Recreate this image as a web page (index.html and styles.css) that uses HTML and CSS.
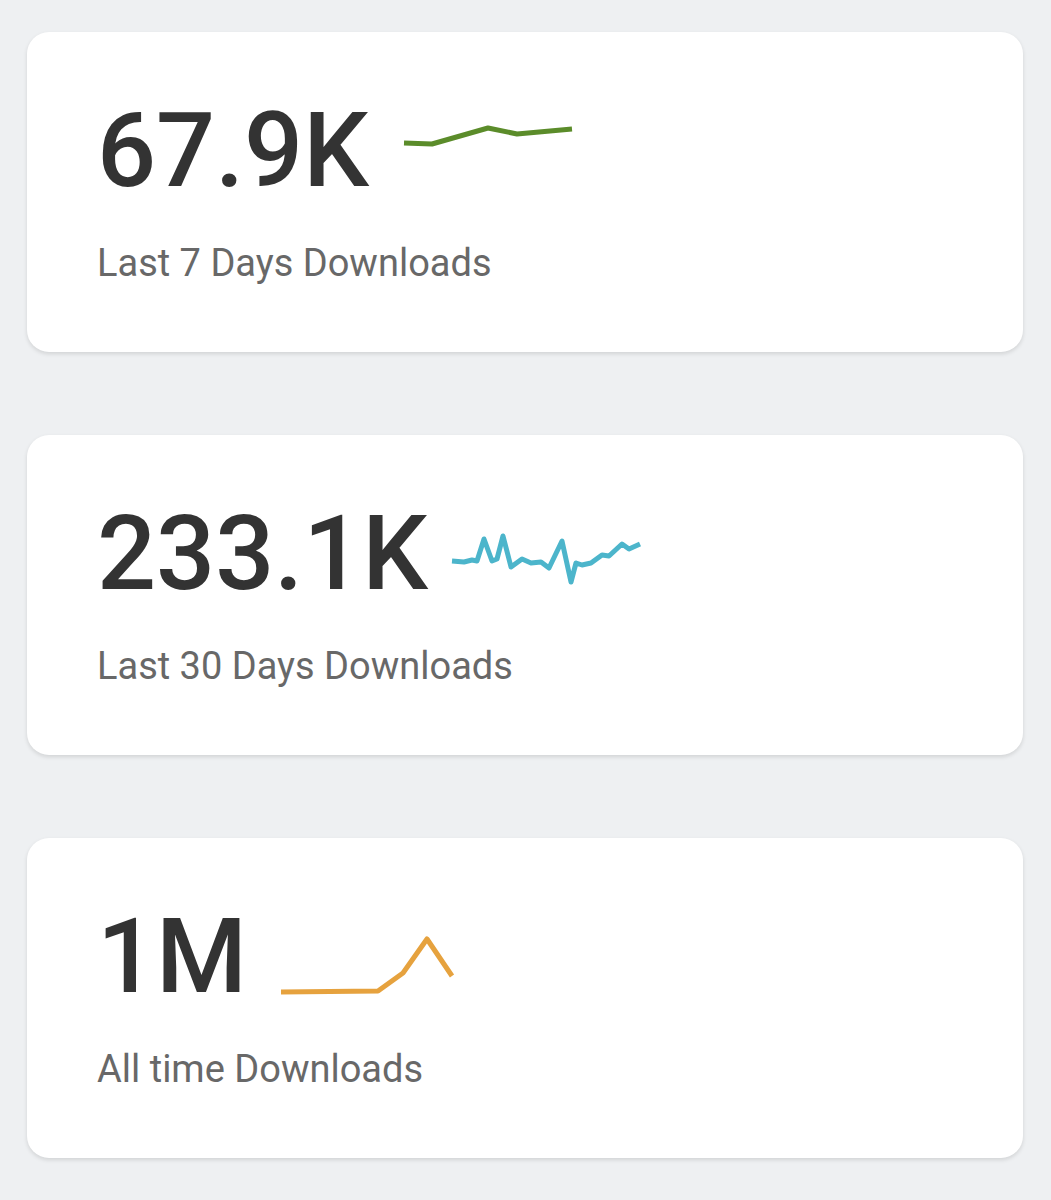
FILE: index.html
```html
<!DOCTYPE html>
<html lang="en">
<head>
    <meta charset="UTF-8">
    <meta name="viewport" content="width=device-width, initial-scale=1.0">
    <title>Downloads</title>
    <link rel="stylesheet" href="styles.css">
</head>
<body>

<div class="list">
    <div class="card">
        <div class="top">
            <span class="number">67.9K</span>
            <svg class="spark" width="210" height="104" viewBox="0 0 210 104">
                <polyline class="green" points="23,44 51,45 107,29 136,35 191,30"/>
            </svg>
        </div>
        <div class="label">Last 7 Days Downloads</div>
    </div>

    <div class="card">
        <div class="top">
            <span class="number">233.1K</span>
            <svg class="spark" width="210" height="104" viewBox="0 0 210 104">
                <polyline class="cyan" points="12,59 24,60 32,58 37,59 44,37 52,59 57,57 63,34 71,65 82,57 91,61 101,60 109,66 122,39 131,80 136,61 142,63 151,61 162,53 169,54 182,42 189,47 200,42"/>
            </svg>
        </div>
        <div class="label">Last 30 Days Downloads</div>
    </div>

    <div class="card">
        <div class="top">
            <span class="number">1M</span>
            <svg class="spark" width="210" height="104" viewBox="0 0 210 104">
                <polyline class="orange" points="22,87 119,86 144,68 168,34 193,71"/>
            </svg>
        </div>
        <div class="label">All time Downloads</div>
    </div>
</div>

</body>
</html>
```
FILE: styles.css
```css
body {
    font-family: Roboto, "Noto Sans", sans-serif;
    background-color: #eef0f2;
    margin: 0;
    padding: 32px 28px 32px 27px;
}
.list {
    display: flex;
    flex-direction: column;
    gap: 83px;
}
.card {
    background: white;
    height: 320px;
    box-sizing: border-box;
    padding: 67px 70px 0;
    border-radius: 22px;
    box-shadow: 0 2px 4px rgba(0, 0, 0, 0.12);
}
.top {
    display: flex;
    align-items: flex-start;
}
.number {
    font-size: 104px;
    line-height: 1;
    font-weight: 500;
    color: #333;
}
.spark {
    margin-left: 12px;
    overflow: visible;
}
.spark polyline {
    fill: none;
    stroke-width: 5;
    stroke-linejoin: round;
}
.green { stroke: #5b8c2a; }
.cyan { stroke: #4cb5cb; }
.orange { stroke: #e6a23e; }
.label {
    margin-top: 41px;
    font-size: 38px;
    line-height: 1;
    color: #686868;
}
```
